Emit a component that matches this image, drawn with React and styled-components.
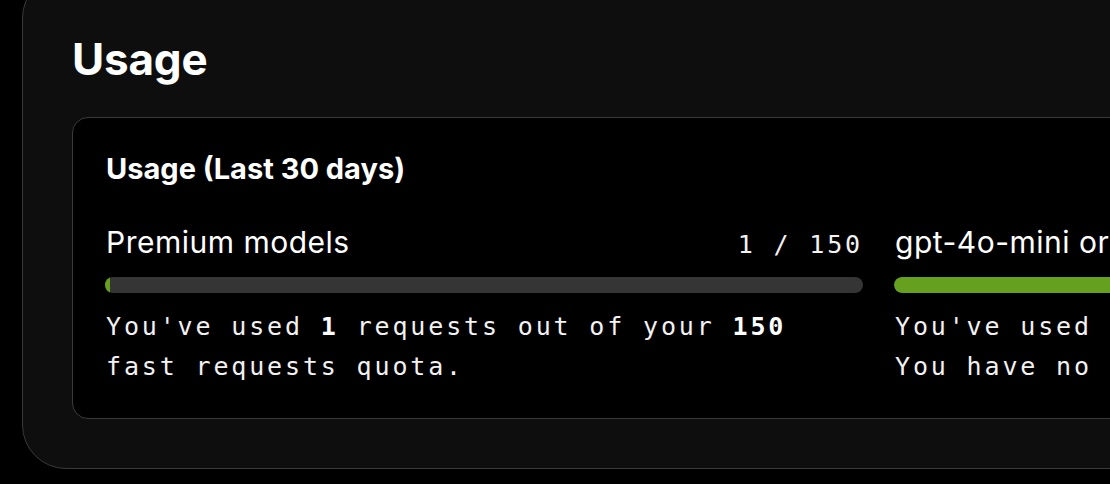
import React from "react";
import styled, { createGlobalStyle } from "styled-components";

const Global = createGlobalStyle`
  html, body { margin: 0; padding: 0; background: #000; overflow: hidden; }
  body { font-family: Inter, "Noto Sans", sans-serif; color: #fff; }
`;

const Page = styled.div`
  padding: 0 0 0 22px;
  width: 1110px;
  height: 484px;
  overflow: hidden;
  box-sizing: border-box;
`;

const Panel = styled.section`
  margin-top: -26px;
  width: 1720px;
  box-sizing: border-box;
  background: #0e0e0e;
  border: 1px solid #3a3a3a;
  border-radius: 44px;
  padding: 58px 49px 49px;
`;

const Title = styled.h1`
  margin: 0 0 32px;
  font-family: Inter, sans-serif;
  font-weight: 700;
  font-size: 44px;
  line-height: 52px;
  letter-spacing: -0.2px;
  color: #fff;
`;

const Card = styled.div`
  background: #000;
  border: 1px solid #3a3a3a;
  border-radius: 16px;
  padding: 33px 33px 31px;
`;

const CardTitle = styled.h2`
  margin: 0 0 38px;
  font-family: Inter, sans-serif;
  font-weight: 700;
  font-size: 29px;
  line-height: 36px;
  letter-spacing: 0;
  color: #fff;
`;

const Columns = styled.div`
  display: grid;
  grid-template-columns: 757px 757px;
  column-gap: 32px;
`;

const Meter = styled.div`
  display: flex;
  flex-direction: column;
`;

const MeterHead = styled.div`
  display: flex;
  justify-content: space-between;
  align-items: baseline;
  margin-bottom: 18px;
`;

const MeterLabel = styled.span`
  font-family: Inter, sans-serif;
  font-size: 30px;
  line-height: 34px;
  letter-spacing: 0.5px;
  color: #fff;
`;

const Count = styled.span`
  font-family: "DejaVu Sans Mono", monospace;
  font-size: 25px;
  letter-spacing: 2.85px;
  color: #f2f2f2;
`;

const Track = styled.div`
  height: 16px;
  border-radius: 8px;
  background: #353535;
  overflow: hidden;
  margin-bottom: 14px;
  margin-left: -1px;
`;

const Fill = styled.div`
  height: 100%;
  background: #65a11e;
  border-radius: 8px 0 0 8px;
`;

const Note = styled.p`
  margin: 0;
  font-family: "DejaVu Sans Mono", monospace;
  font-size: 25px;
  line-height: 40px;
  letter-spacing: 2.85px;
  color: #f2f2f2;
  b { font-weight: 700; color: #fff; }
`;

function UsageMeter({ label, count, pct, children }) {
  return (
    <Meter>
      <MeterHead>
        <MeterLabel>{label}</MeterLabel>
        <Count>{count}</Count>
      </MeterHead>
      <Track>
        <Fill style={{ width: `${pct}%` }} />
      </Track>
      <Note>{children}</Note>
    </Meter>
  );
}

export default function App() {
  return (
    <>
      <Global />
      <Page>
        <Panel>
          <Title>Usage</Title>
          <Card>
            <CardTitle>Usage (Last 30 days)</CardTitle>
            <Columns>
              <UsageMeter label="Premium models" count="1 / 150" pct={0.67}>
                You've used <b>1</b> requests out of your <b>150</b> fast requests quota.
              </UsageMeter>
              <UsageMeter label="gpt-4o-mini or cursor-small" count="0 / No Limit" pct={100}>
                You've used <b>0</b> requests of this model.
                <br />
                You have no monthly quota.
              </UsageMeter>
            </Columns>
          </Card>
        </Panel>
      </Page>
    </>
  );
}
